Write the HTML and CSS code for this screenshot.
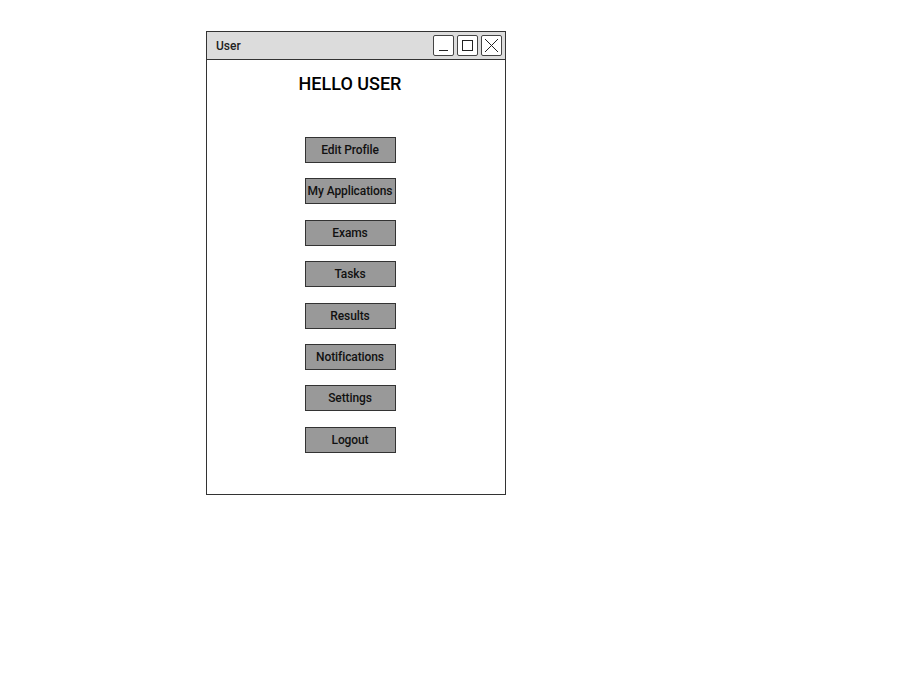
FILE: index.html
```html
<!DOCTYPE html>
<html>
<head>
<meta charset="utf-8">
<link rel="stylesheet" href="styles.css">
</head>
<body>
<div class="window">
  <div class="titlebar">
    <span class="title">User</span>
    <div class="controls">
      <span class="ctl"><svg width="21" height="21" viewBox="0 0 21 21"><line x1="6" y1="15.5" x2="15" y2="15.5" stroke="#222" stroke-width="1"/></svg></span>
      <span class="ctl"><svg width="21" height="21" viewBox="0 0 21 21"><rect x="5.5" y="5.5" width="10" height="10" fill="none" stroke="#222" stroke-width="1"/></svg></span>
      <span class="ctl"><svg width="21" height="21" viewBox="0 0 21 21"><path d="M4 4 L17 17 M17 4 L4 17" stroke="#222" stroke-width="1"/></svg></span>
    </div>
  </div>
  <div class="content">
    <h1 class="heading">HELLO USER</h1>
    <div class="menu">
      <div class="btn">Edit Profile</div>
      <div class="btn">My Applications</div>
      <div class="btn">Exams</div>
      <div class="btn">Tasks</div>
      <div class="btn">Results</div>
      <div class="btn">Notifications</div>
      <div class="btn">Settings</div>
      <div class="btn">Logout</div>
    </div>
  </div>
</div>
</body>
</html>
```

FILE: styles.css
```css
html, body {
  margin: 0;
  padding: 0;
  background: #fff;
}
body {
  font-family: Roboto, "Liberation Sans", sans-serif;
  color: #111;
}
.window {
  margin: 31px 0 0 206px;
  width: 298px;
  border: 1px solid #333;
  background: #fff;
}
.titlebar {
  height: 27px;
  background: #dcdcdc;
  border-bottom: 1px solid #333;
  display: flex;
  align-items: center;
  justify-content: space-between;
  padding: 0 3px 0 9px;
}
.title {
  font-size: 12px;
  font-weight: 500;
  color: #222;
}
.controls {
  display: flex;
  gap: 3px;
}
.ctl {
  width: 21px;
  height: 21px;
  box-sizing: border-box;
  border: 1px solid #444;
  border-radius: 2px;
  background: #fff;
  display: flex;
  align-items: center;
  justify-content: center;
  overflow: hidden;
}
.ctl svg {
  display: block;
  flex: none;
}
.content {
  padding: 14px 12px 41px 0;
  display: flex;
  flex-direction: column;
  align-items: center;
}
.heading {
  margin: 0 0 43px;
  font-size: 18px;
  line-height: 20px;
  font-weight: 500;
  color: #000;
}
.menu {
  display: flex;
  flex-direction: column;
  align-items: center;
  gap: 15.4px;
}
.btn {
  width: 91px;
  height: 26px;
  box-sizing: border-box;
  border: 1px solid #333;
  background: #999;
  font-size: 12px;
  font-weight: 500;
  color: #111;
  display: flex;
  align-items: center;
  justify-content: center;
  white-space: nowrap;
  letter-spacing: -0.1px;
}
```
